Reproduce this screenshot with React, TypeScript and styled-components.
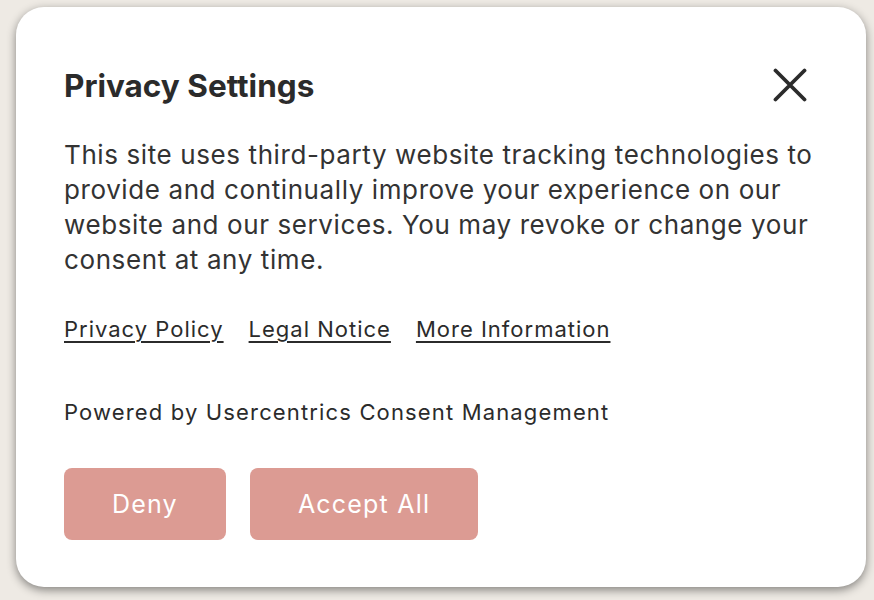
import React from "react";
import styled, { createGlobalStyle } from "styled-components";

const GlobalStyle = createGlobalStyle`
  html, body {
    margin: 0;
    padding: 0;
    background: #eeeae4;
  }
  * { box-sizing: border-box; }
`;

const Page = styled.div`
  width: 874px;
  height: 600px;
  padding: 7px 8px 0 16px;
  background: #eeeae4;
  font-family: Inter, "Noto Sans", sans-serif;
  overflow: hidden;
`;

const Card = styled.div`
  width: 850px;
  height: 580px;
  background: #ffffff;
  border-radius: 28px;
  box-shadow: 0 3px 10px rgba(0, 0, 0, 0.45);
  padding: 0 48px;
  display: flex;
  flex-direction: column;
  color: #2b2b2b;
`;

const Header = styled.div`
  display: flex;
  align-items: center;
  justify-content: space-between;
  height: 60px;
  margin-top: 48px;
`;

const Title = styled.h2`
  margin: 0;
  font-size: 31.5px;
  font-weight: 700;
  color: #2b2b2b;
`;

const CloseButton = styled.button`
  border: none;
  background: none;
  padding: 0;
  margin-right: 11px;
  width: 34px;
  height: 34px;
  display: flex;
  align-items: center;
  justify-content: center;
  cursor: pointer;
`;

const Body = styled.p`
  margin: 22px 0 0;
  font-size: 26px;
  line-height: 35px;
  letter-spacing: 0.6px;
  color: #333;
`;

const Links = styled.div`
  display: flex;
  gap: 25px;
  margin-top: 38px;
  line-height: 28px;
`;

const Link = styled.a`
  font-size: 22px;
  letter-spacing: 1px;
  color: #2b2b2b;
  text-decoration: underline;
  text-underline-offset: 4px;
  text-decoration-thickness: 1.5px;
`;

const Powered = styled.div`
  margin-top: 55px;
  font-size: 22px;
  line-height: 28px;
  letter-spacing: 1.15px;
  color: #2b2b2b;
`;

const Buttons = styled.div`
  display: flex;
  gap: 24px;
  margin-top: 42px;
`;

const Button = styled.button`
  height: 72px;
  padding: 0 48px;
  border: none;
  border-radius: 8px;
  background: #dc9b93;
  color: #fff;
  font-family: Inter, "Noto Sans", sans-serif;
  font-size: 25px;
  letter-spacing: 1.2px;
  cursor: pointer;
`;

export default function App() {
  return (
    <>
      <GlobalStyle />
      <Page>
        <Card>
          <Header>
            <Title>Privacy Settings</Title>
            <CloseButton aria-label="Close">
              <svg width="34" height="34" viewBox="0 0 34 34">
                <path
                  d="M2.5 2.5 L31.5 31.5 M31.5 2.5 L2.5 31.5"
                  stroke="#2b2b2b"
                  strokeWidth="3.8"
                  strokeLinecap="round"
                />
              </svg>
            </CloseButton>
          </Header>
          <Body>
            This site uses third-party website tracking technologies to provide
            and continually improve your experience on our website and our
            services. You may revoke or change your consent at any time.
          </Body>
          <Links>
            <Link>Privacy Policy</Link>
            <Link>Legal Notice</Link>
            <Link>More Information</Link>
          </Links>
          <Powered>Powered by Usercentrics Consent Management</Powered>
          <Buttons>
            <Button>Deny</Button>
            <Button>Accept All</Button>
          </Buttons>
        </Card>
      </Page>
    </>
  );
}
